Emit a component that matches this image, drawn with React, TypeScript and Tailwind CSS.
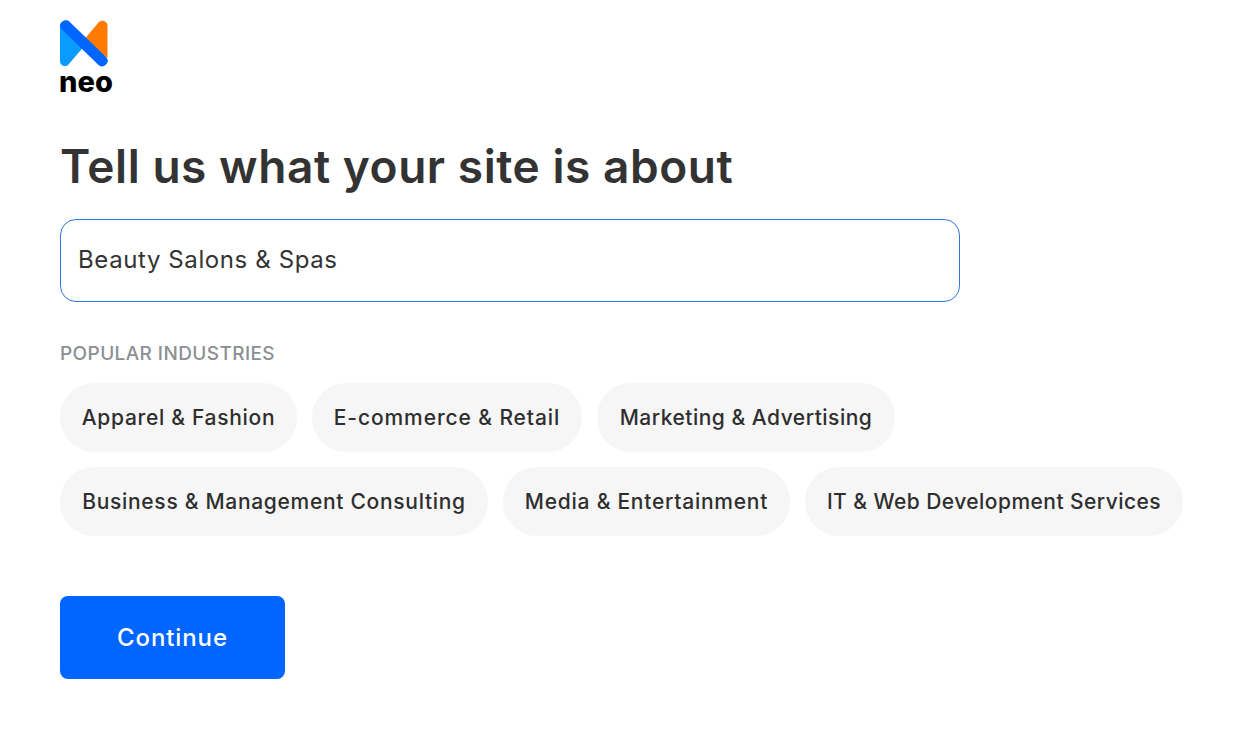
const font = "font-['Inter','Noto_Sans',sans-serif]";

function Logo() {
  return (
    <div className="flex h-[73px] w-[54px] flex-col">
      <svg width="50" height="47" viewBox="0 0 50 47" className="ml-[-1px] block shrink-0">
        <path d="M1 6C1 1.500 6 -1 9.500 2.500L27 24L9.500 44.500C6 48 1 45.500 1 41Z" fill="#0a9bff" />
        <path d="M24 21L39.500 2.500C43 -1 48.500 1.500 48.500 6V38Z" fill="#ff7b00" />
        <path d="M3 2.200C5.500 -0.300 8.500 -0.300 11 2.200L46.500 36.500C49.500 39.500 49.500 42 47 44.500C44.500 47 41.500 47 39 44.500L3 9.500C0.500 7 0.500 4.500 3 2.200Z" fill="#0066ff" />
      </svg>
      <span className="mt-[1px] ml-[-1px] shrink-0 text-[29px] leading-[28px] font-extrabold tracking-[0.1px] text-black">neo</span>
    </div>
  );
}

function Pill({ label, width, spacing }: { label: string; width: string; spacing: string }) {
  return (
    <button className={`flex h-[69px] items-center justify-center rounded-[34px] bg-[#f6f6f6] text-[21px] font-medium whitespace-nowrap text-[#2e2e2e] ${width} ${spacing}`}>
      {label}
    </button>
  );
}

export default function App() {
  return (
    <div className={`min-h-[730px] bg-white pt-[20px] pl-[60px] ${font}`}>
      <Logo />
      <h1 className="mt-[46px] text-[46px] leading-[54px] font-semibold tracking-[0.55px] text-[#333333]">
        Tell us what your site is about
      </h1>
      <div className="mt-[26px] flex h-[83px] w-[900px] items-center rounded-[16px] border border-[#2f74e8] pb-[2px] pl-[17px] text-[24px] tracking-[0.6px] text-[#333333]">
        Beauty Salons &amp; Spas
      </div>
      <div className="mt-[40px] text-[19px] leading-[24px] font-medium tracking-[0.4px] text-[#8c8f91]">POPULAR INDUSTRIES</div>
      <div className="mt-[17px] flex flex-col gap-[15px]">
        <div className="flex gap-[15px]">
          <Pill label="Apparel & Fashion" width="w-[237px]" spacing="tracking-[0.7px]" />
          <Pill label="E-commerce & Retail" width="w-[270px]" spacing="tracking-[0.9px]" />
          <Pill label="Marketing & Advertising" width="w-[298px]" spacing="tracking-[0.5px]" />
        </div>
        <div className="flex gap-[15px]">
          <Pill label="Business & Management Consulting" width="w-[428px]" spacing="tracking-[0.7px]" />
          <Pill label="Media & Entertainment" width="w-[287px]" spacing="tracking-[0.75px]" />
          <Pill label="IT & Web Development Services" width="w-[378px]" spacing="tracking-[0.45px]" />
        </div>
      </div>
      <button className="mt-[60px] h-[83px] w-[225px] rounded-[8px] bg-[#0066ff] text-[24px] font-medium tracking-[0.9px] text-white">
        Continue
      </button>
    </div>
  );
}
